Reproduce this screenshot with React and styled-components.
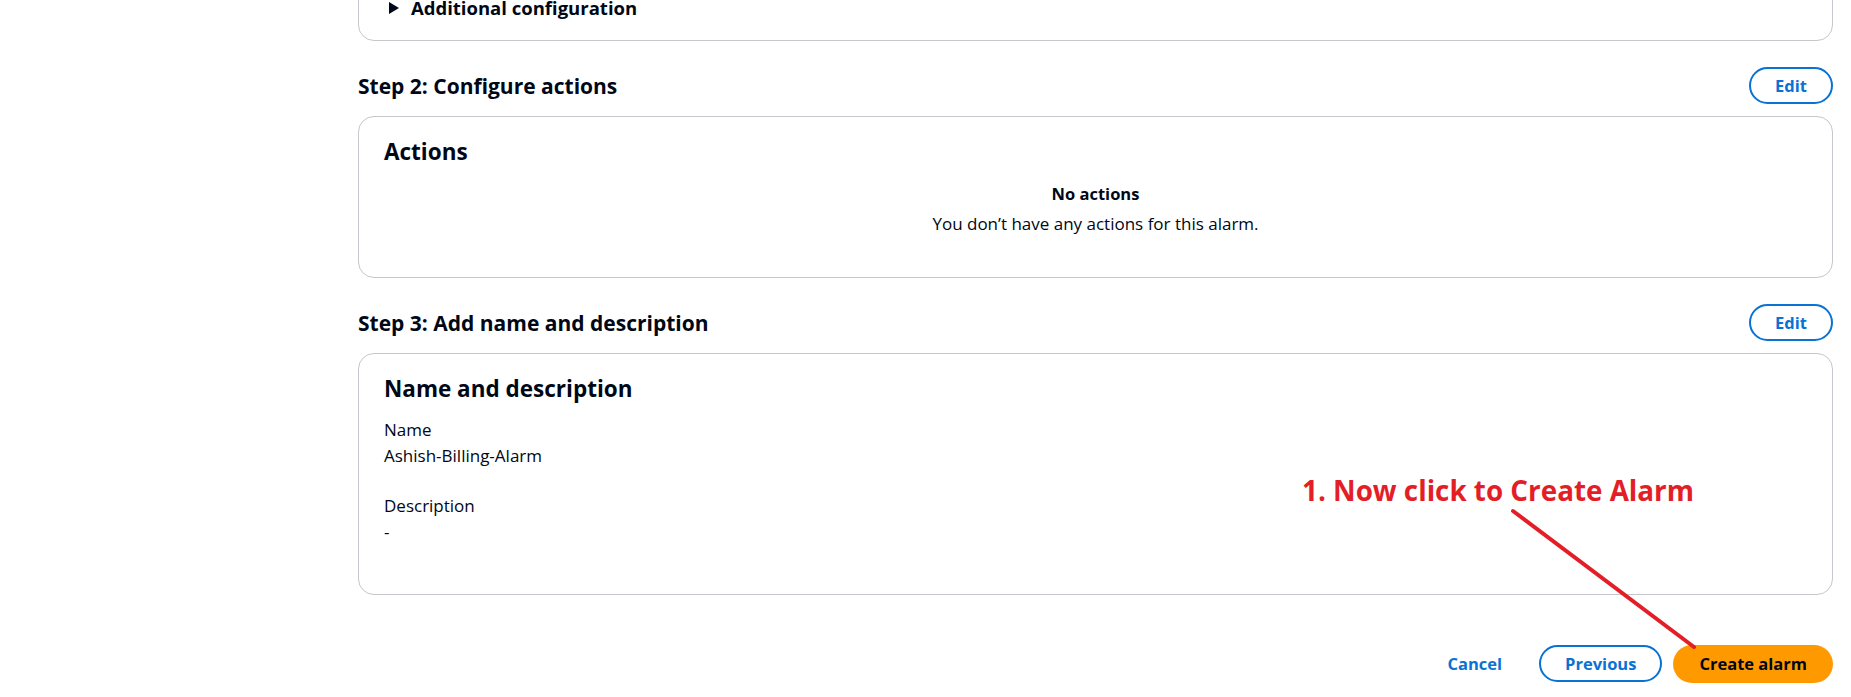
import React from 'react'
import styled, { createGlobalStyle } from 'styled-components'

const GlobalStyle = createGlobalStyle`
  html, body {
    margin: 0;
    padding: 0;
    background: #ffffff;
  }
  body {
    font-family: 'Open Sans', 'Noto Sans', sans-serif;
    color: #000716;
    overflow: hidden;
  }
`

const Page = styled.div`
  position: relative;
  width: 1851px;
  height: 697px;
  overflow: hidden;
`

// page is scrolled: the first card's top is above the window
const Main = styled.main`
  display: flex;
  flex-direction: column;
  margin: -60px 18px 0 358px;
`

const Card = styled.section`
  border: 1px solid #c6c6cd;
  border-radius: 16px;
  padding: ${p => p.pad || '21px 25px'};
  display: flex;
  flex-direction: column;
`

const Disclosure = styled.div`
  display: flex;
  align-items: center;
  gap: 12px;
  margin-left: 5px;
  font-size: 18.5px;
  font-weight: 700;
  line-height: 24px;
`

const StepHeader = styled.div`
  display: flex;
  align-items: center;
  justify-content: space-between;
  padding: 26px 0 12px;
`

const StepTitle = styled.h2`
  margin: 0;
  font-size: 21px;
  font-weight: 700;
  line-height: 28px;
`

const CardTitle = styled.h3`
  margin: 0;
  font-size: 22.5px;
  font-weight: 700;
  line-height: 28px;
`

const OutlineButton = styled.button`
  height: 37px;
  padding: 0 24px;
  border: 2px solid #0972d3;
  border-radius: 20px;
  background: #ffffff;
  color: #0972d3;
  font-family: inherit;
  font-size: 16.5px;
  font-weight: 700;
  cursor: pointer;
`

const LinkButton = styled.button`
  height: 37px;
  padding: 0 26px;
  border: none;
  background: transparent;
  color: #0972d3;
  font-family: inherit;
  font-size: 16.5px;
  font-weight: 700;
  cursor: pointer;
`

const PrimaryButton = styled.button`
  height: 38px;
  padding: 0 26px;
  border: none;
  border-radius: 20px;
  background: #ff9900;
  color: #000716;
  font-family: inherit;
  font-size: 16.5px;
  font-weight: 700;
  cursor: pointer;
`

const Empty = styled.div`
  display: flex;
  flex-direction: column;
  align-items: center;
  gap: 6px;
  margin-top: 16px;
  font-size: 17px;
  line-height: 24px;
`

const EmptyTitle = styled.div`
  font-weight: 700;
  font-size: 16.5px;
`

const Field = styled.div`
  display: flex;
  flex-direction: column;
  gap: 2px;
  margin-top: ${p => p.top}px;
  font-size: 17px;
  line-height: 24px;
`

const Actions = styled.div`
  display: flex;
  justify-content: flex-end;
  align-items: center;
  gap: 11px;
  margin-top: 50px;
`

const Note = styled.div`
  position: absolute;
  left: 1302px;
  top: 472px;
  color: #e31e26;
  font-size: 27.8px;
  font-weight: 700;
  line-height: 36px;
  white-space: nowrap;
`

const Pointer = styled.svg`
  position: absolute;
  left: 0;
  top: 0;
  pointer-events: none;
`

const Caret = () => (
  <svg width="10" height="12" viewBox="0 0 10 12">
    <path d="M0 0 L10 6 L0 12 Z" fill="#000716" />
  </svg>
)

const App = () => (
  <Page>
    <GlobalStyle />
    <Main>
      <Card pad="55px 25px 20px">
        <Disclosure>
          <Caret />
          Additional configuration
        </Disclosure>
      </Card>

      <StepHeader>
        <StepTitle>Step 2: Configure actions</StepTitle>
        <OutlineButton>Edit</OutlineButton>
      </StepHeader>
      <Card pad="21px 25px 41px">
        <CardTitle>Actions</CardTitle>
        <Empty>
          <EmptyTitle>No actions</EmptyTitle>
          <div>You don’t have any actions for this alarm.</div>
        </Empty>
      </Card>

      <StepHeader>
        <StepTitle>Step 3: Add name and description</StepTitle>
        <OutlineButton>Edit</OutlineButton>
      </StepHeader>
      <Card pad="21px 25px 50px">
        <CardTitle>Name and description</CardTitle>
        <Field top={15}>
          <div>Name</div>
          <div>Ashish-Billing-Alarm</div>
        </Field>
        <Field top={25.5}>
          <div>Description</div>
          <div>-</div>
        </Field>
      </Card>

      <Actions>
        <LinkButton>Cancel</LinkButton>
        <OutlineButton>Previous</OutlineButton>
        <PrimaryButton>Create alarm</PrimaryButton>
      </Actions>
    </Main>

    <Note>1. Now click to Create Alarm</Note>
    <Pointer width="1851" height="697">
      <line x1="1513" y1="511" x2="1694" y2="647" stroke="#e31e26" strokeWidth="4" strokeLinecap="round" />
    </Pointer>
  </Page>
)

export default App
